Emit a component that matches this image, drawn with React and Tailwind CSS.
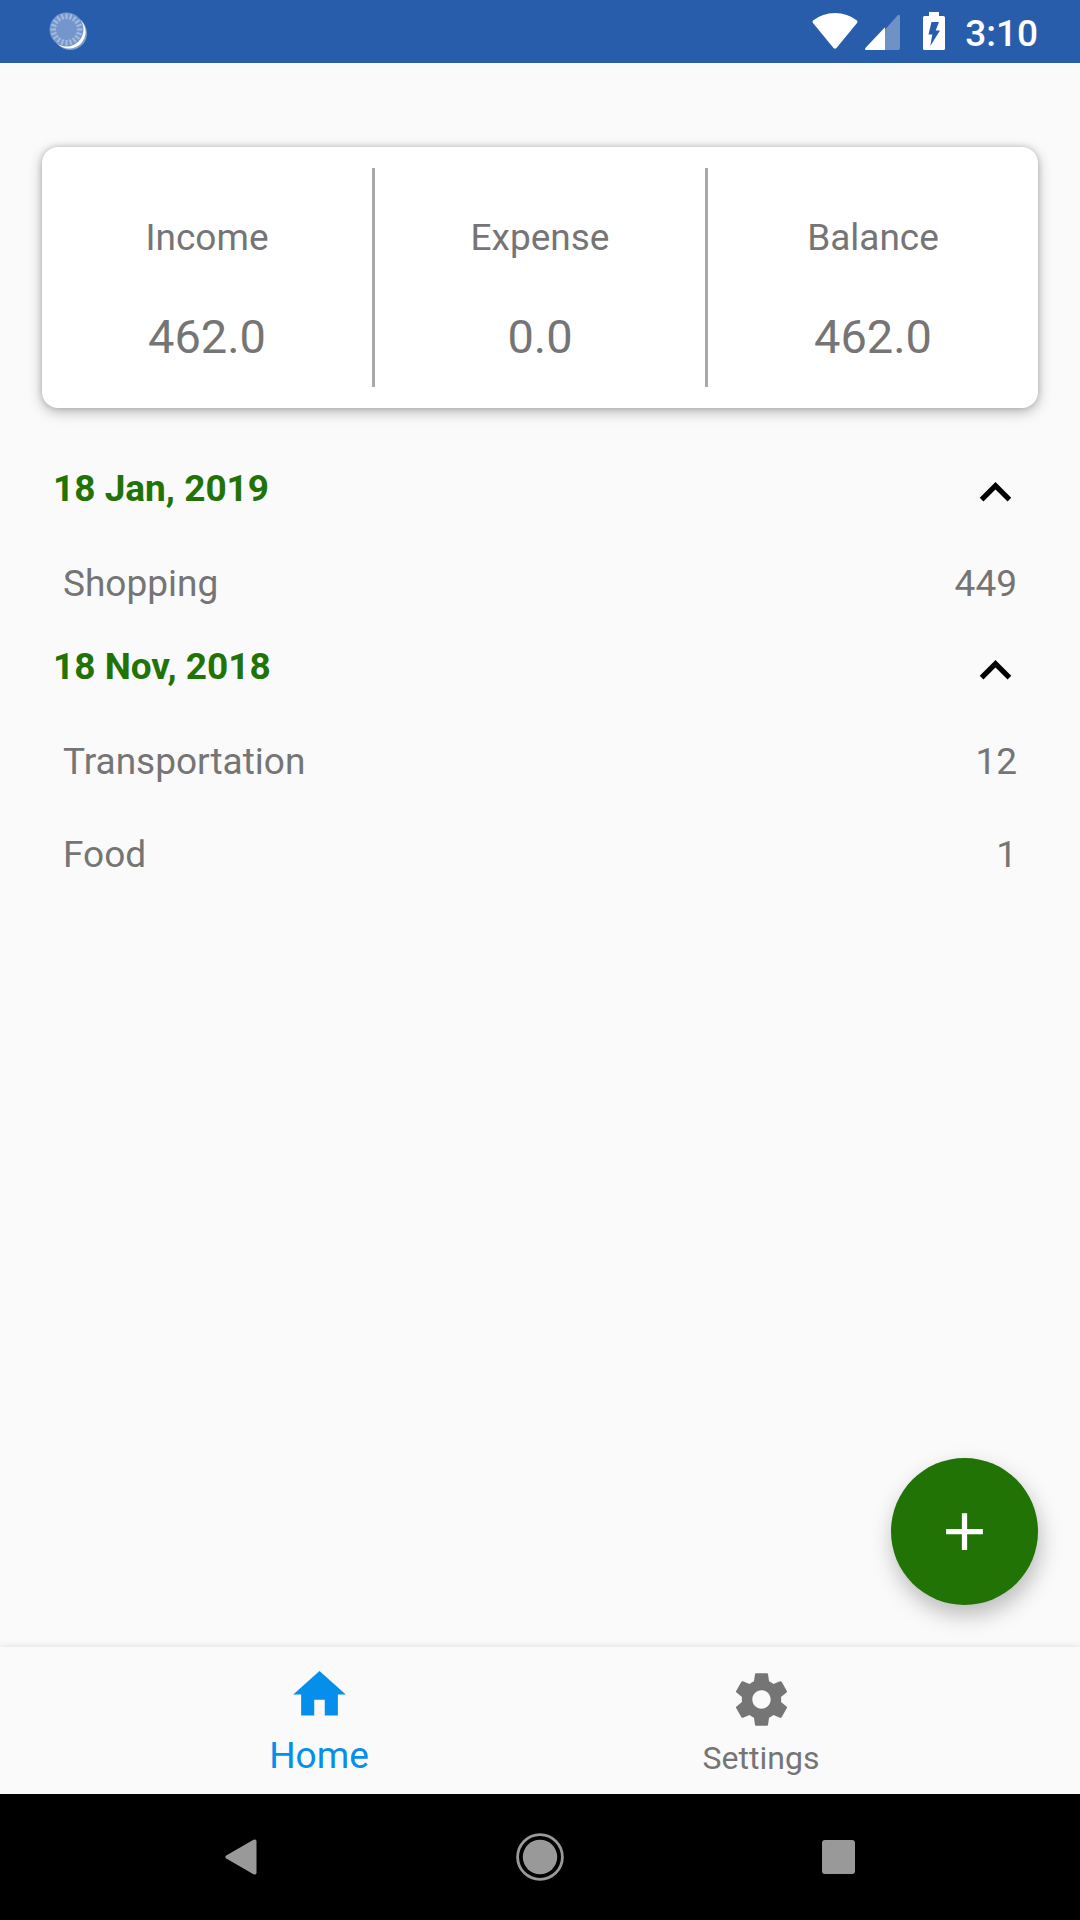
import { useState } from "react";

const SUMMARY = [
  { label: "Income", value: "462.0" },
  { label: "Expense", value: "0.0" },
  { label: "Balance", value: "462.0" },
];

const GROUPS = [
  { date: "18 Jan, 2019", items: [{ name: "Shopping", amount: "449" }] },
  {
    date: "18 Nov, 2018",
    items: [
      { name: "Transportation", amount: "12" },
      { name: "Food", amount: "1" },
    ],
  },
];

const ICONS = {
  less: "M12 8l-6 6 1.41 1.41L12 10.83l4.59 4.58L18 14z",
  add: "M19 13h-6v6h-2v-6H5v-2h6V5h2v6h6v2z",
  home: "M10 20v-6h4v6h5v-8h3L12 3 2 12h3v8z",
  settings:
    "M19.43 12.98c.04-.32.07-.64.07-.98s-.03-.66-.07-.98l2.11-1.65c.19-.15.24-.42.12-.64l-2-3.46c-.12-.22-.39-.3-.61-.22l-2.49 1c-.52-.4-1.08-.73-1.69-.98l-.38-2.65C14.46 2.18 14.25 2 14 2h-4c-.25 0-.46.18-.49.42l-.38 2.65c-.61.25-1.17.59-1.69.98l-2.49-1c-.23-.09-.49 0-.61.22l-2 3.46c-.13.22-.07.49.12.64l2.11 1.65c-.04.32-.07.65-.07.98s.03.66.07.98l-2.11 1.65c-.19.15-.24.42-.12.64l2 3.46c.12.22.39.3.61.22l2.49-1c.52.4 1.08.73 1.69.98l.38 2.65c.03.24.24.42.49.42h4c.25 0 .46-.18.49-.42l.38-2.65c.61-.25 1.17-.59 1.69-.98l2.49 1c.23.09.49 0 .61-.22l2-3.46c.12-.22.07-.49-.12-.64l-2.11-1.65zM12 15.5c-1.93 0-3.5-1.57-3.5-3.5s1.57-3.5 3.5-3.5 3.5 1.57 3.5 3.5-1.57 3.5-3.5 3.5z",
};

function Icon({ name, className = "" }) {
  return (
    <svg viewBox="0 0 24 24" fill="currentColor" aria-hidden="true" className={`size-[63px] shrink-0 ${className}`}>
      <path d={ICONS[name]} />
    </svg>
  );
}

function Spinner() {
  const ticks = Array.from({ length: 20 }, (_, i) => i * 18);
  return (
    <svg viewBox="0 0 38 38" className="size-[38px]" aria-hidden="true">
      <circle cx="21.2" cy="21.2" r="16.8" fill="#fff" opacity="0.4" />
      <circle cx="20" cy="20" r="16.6" fill="#fff" />
      <circle cx="17.5" cy="17.5" r="17" fill="#7496cb" />
      {ticks.map((a) => (
        <line key={a} x1="17.500" y1="1.500" x2="17.500" y2="7" stroke="#a3b9dd" strokeWidth="2.200" transform={`rotate(${a} 17.5 17.5)`} />
      ))}
    </svg>
  );
}

function StatusBar() {
  return (
    <header className="flex h-[63px] items-start justify-between bg-[#275dab] pt-3 pr-[42px] pl-[49px] text-white">
      <Spinner />
      <div className="flex items-start">
        <svg viewBox="0 0 46 38" className="h-[38px] w-[46px]" fill="currentColor" aria-hidden="true">
          <path d="M1 8.6Q10.500 1 23 1T45 8.600Q46 9.600 45.200 10.800L24.500 36Q23 37.600 21.500 36L.8 10.800Q0 9.600 1 8.600z" />
        </svg>
        <svg viewBox="0 0 35 38" className="ml-[7px] h-[38px] w-[35px]" fill="currentColor" aria-hidden="true">
          <path d="M20 17.500L32.500 3.600Q35 1.600 35 4.500V36Q35 38 33 38H20z" opacity="0.33" />
          <path d="M20 15.200V38H1.500Q-.8 38 .6 35.800z" />
        </svg>
        <svg viewBox="0 0 22 38" className="ml-[23px] h-[38px] w-[22px]" aria-hidden="true">
          <path d="M6 0h10v4h4.500Q22 4 22 5.500V36.500Q22 38 20.500 38h-19Q0 38 0 36.500V5.500Q0 4 1.500 4H6z" fill="#fff" />
          <path d="M8.500 10H16l-3.300 8.500H17L7.300 34l2-11.500H5.500z" fill="#275dab" />
        </svg>
        <time className="ml-5 text-[37px] leading-[43px] font-medium">3:10</time>
      </div>
    </header>
  );
}

function SummaryCard() {
  return (
    <dl className="mx-[42px] mt-[84px] flex rounded-2xl bg-white py-[21px] shadow-[0_4px_14px_rgba(0,0,0,0.26),0_0_6px_rgba(0,0,0,0.18)]">
      {SUMMARY.map(({ label, value }, i) => (
        <div key={label} className="contents">
          {i > 0 && <div className="w-[3px] shrink-0 bg-[#a9a9a9]" />}
          <div className="flex flex-1 flex-col items-center gap-[50px] pt-12 pb-[23px]">
            <dt className="text-[37px] leading-[43px]">{label}</dt>
            <dd className="text-[47px] leading-[55px]">{value}</dd>
          </div>
        </div>
      ))}
    </dl>
  );
}

function Group({ date, items }) {
  const [open, setOpen] = useState(true);
  return (
    <section>
      <h2>
        <button
          type="button"
          aria-expanded={open}
          onClick={() => setOpen(!open)}
          className="flex w-full items-start justify-between pt-[9px] pr-[53px] pb-[13px] pl-[53px]"
        >
          <span className="text-[37px] leading-[55px] font-bold text-[#227305]">{date}</span>
          <Icon name="less" className={open ? "text-black" : "rotate-180 text-black"} />
        </button>
      </h2>
      {open && (
        <ul>
          {items.map(({ name, amount }) => (
            <li key={name} className="flex justify-between px-[63px] py-[25px] text-[37px] leading-[43px]">
              <span>{name}</span>
              <span>{amount}</span>
            </li>
          ))}
        </ul>
      )}
    </section>
  );
}

function BottomNav() {
  const tab = "flex max-w-[442px] flex-1 flex-col items-center justify-end gap-2 pb-[17px]";
  return (
    <nav className="relative flex h-[147px] justify-center bg-[#fafafa] shadow-[0_0_8px_rgba(0,0,0,0.12)]">
      <a href="#home" aria-current="page" className={`${tab} text-[#048feb]`}>
        <Icon name="home" />
        <span className="text-[37px] leading-[43px]">Home</span>
      </a>
      <a href="#settings" className={tab}>
        <Icon name="settings" />
        <span className="text-[32px] leading-[38px]">Settings</span>
      </a>
    </nav>
  );
}

function SystemBar() {
  const key = "flex flex-1 items-center justify-center";
  return (
    <footer className="relative flex h-[126px] justify-center bg-black text-[#999]">
      <div className="flex w-full max-w-[896px]">
        <button type="button" aria-label="Back" className={key}>
          <svg viewBox="0 0 32 36" className="h-9 w-8" fill="currentColor" aria-hidden="true">
            <path d="M1.200 16.500L28.500.8Q31.500-.4 31.500 2.500v31Q31.500 36.400 28.500 35.200L1.200 19.500Q-.6 18 1.200 16.500z" />
          </svg>
        </button>
        <button type="button" aria-label="Home screen" className={key}>
          <svg viewBox="0 0 48 48" className="size-12" aria-hidden="true">
            <circle cx="24" cy="24" r="22.400" fill="none" stroke="currentColor" strokeWidth="2.800" />
            <circle cx="24" cy="24" r="17.200" fill="currentColor" />
          </svg>
        </button>
        <button type="button" aria-label="Recent apps" className={key}>
          <span className="h-[34px] w-[33px] rounded-[3px] bg-[#999]" />
        </button>
      </div>
    </footer>
  );
}

export default function App() {
  return (
    <div className="flex min-h-screen flex-col bg-[#fafafa] font-[Roboto,sans-serif] text-[#757575]">
      <StatusBar />
      <main className="relative flex-1">
        <SummaryCard />
        <div className="mt-11">
          {GROUPS.map((g) => (
            <Group key={g.date} {...g} />
          ))}
        </div>
        <button
          type="button"
          aria-label="Add transaction"
          className="absolute right-[42px] bottom-[42px] flex size-[147px] items-center justify-center rounded-full bg-[#227305] text-white shadow-[2px_10px_22px_rgba(0,0,0,0.26)]"
        >
          <Icon name="add" />
        </button>
      </main>
      <BottomNav />
      <SystemBar />
    </div>
  );
}
